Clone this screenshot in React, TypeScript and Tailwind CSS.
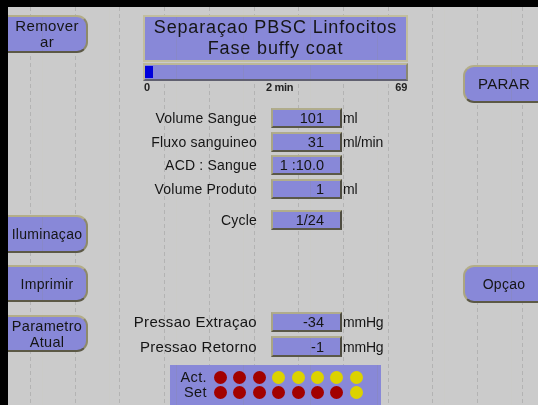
const PURPLE = "bg-[#8888d8]";

function SideButton({
  lines,
  side,
  h,
  text = "text-[14px] tracking-[0.3px]",
}: {
  lines: string[];
  side: "left" | "right";
  h: string;
  text?: string;
}) {
  const shape =
    side === "left"
      ? "rounded-r-[11px] border-2 border-l-0"
      : "rounded-l-[11px] border-2 border-r-0";
  return (
    <div
      className={`${PURPLE} ${shape} ${h} ${text} w-[80px] flex flex-col items-center justify-center border-t-[#b4ae88] border-r-[#8e8a68] border-l-[#aca680] border-b-[#5c5946] leading-[16px]`}
    >
      {lines.map((l) => (
        <span key={l}>{l}</span>
      ))}
    </div>
  );
}

function ValueRow({
  label,
  value,
  unit,
  mt,
  h = "h-[20px]",
  size = "text-[14px] tracking-[0.2px]",
}: {
  label: string;
  value: string;
  unit?: string;
  mt: string;
  h?: string;
  size?: string;
}) {
  return (
    <div className={`flex items-center ${mt} ${h}`}>
      <div className={`w-[169px] text-right leading-[16px] ${size}`}>
        {label}
      </div>
      <div
        className={`${PURPLE} ml-[14px] w-[71px] h-full flex items-center justify-end pr-[16px] border-2 border-t-[#b0ac8c] border-l-[#aaa684] border-b-[#5a5848] border-r-[#4e4c40] text-[14.5px] leading-[16px]`}
      >
        {value}
      </div>
      {unit && (
        <div className="ml-[1px] text-[14px] leading-[16px] tracking-[-0.2px]">
          {unit}
        </div>
      )}
    </div>
  );
}

function Dot({ c }: { c: "r" | "y" }) {
  return (
    <div
      className={
        c === "r"
          ? "w-[13px] h-[13px] rounded-full bg-[#a20000]"
          : "w-[13px] h-[13px] rounded-full bg-[#dcd200]"
      }
    />
  );
}

export default function App() {
  const gridA = Array.from({ length: 12 }, (_, k) => 30 + 44.7 * k);
  const gridB = Array.from({ length: 8 }, (_, k) => 42 + 67 * k);
  const act: ("r" | "y")[] = ["r", "r", "r", "y", "y", "y", "y", "y"];
  const set: ("r" | "y")[] = ["r", "r", "r", "r", "r", "r", "r", "y"];
  return (
    <div className="relative w-[538px] h-[405px] overflow-hidden bg-[#cbcbcb] border-t-[7px] border-l-[8px] border-black font-['Liberation_Sans',Arial,sans-serif] text-[#151515]">
      <svg
        className="absolute left-0 top-0 pointer-events-none"
        width={530}
        height={398}
      >
        {gridA.map((x) => (
          <line
            key={x}
            x1={Math.round(x - 8) + 0.5}
            x2={Math.round(x - 8) + 0.5}
            y1={0}
            y2={398}
            stroke="#b3b3b3"
            strokeWidth={1}
            strokeDasharray="4 3"
          />
        ))}
      </svg>

      <div className="relative flex h-full">
        {/* left column */}
        <div className="w-[80px] flex flex-col">
          <div className="mt-[8px]">
            <SideButton
              side="left"
              lines={["Remover", "ar"]}
              h="h-[38px]"
              text="text-[15px] tracking-[0.4px]"
            />
          </div>
          <div className="mt-[162px]">
            <SideButton side="left" lines={["Iluminaçao"]} h="h-[38px]" />
          </div>
          <div className="mt-[12px]">
            <SideButton side="left" lines={["Imprimir"]} h="h-[37px]" />
          </div>
          <div className="mt-[13px]">
            <SideButton
              side="left"
              lines={["Parametro", "Atual"]}
              h="h-[37px]"
              text="text-[14.5px] tracking-[0.3px]"
            />
          </div>
        </div>

        {/* center column */}
        <div className="w-[375px] flex flex-col">
          <div
            className={`${PURPLE} mt-[8px] ml-[55px] w-[265px] h-[47px] border-2 border-[#c2be9e] flex flex-col items-center justify-center text-[18px] leading-[21px] tracking-[0.85px]`}
          >
            <span>Separaçao PBSC Linfocitos</span>
            <span>Fase buffy coat</span>
          </div>
          <div
            className={`${PURPLE} mt-[1px] ml-[55px] w-[265px] h-[18px] border-2 border-t-[#bcb898] border-l-[#bcb898] border-r-[#8a8870] border-b-[#606070] flex items-stretch py-[1px]`}
          >
            <div className="w-[8px] bg-[#0000dc]" />
          </div>
          <div className="ml-[55px] w-[265px] h-[12px] flex items-center justify-between px-[1px] text-[11px] leading-[12px] font-bold tracking-[-0.3px] text-[#222]">
            <span>0</span>
            <span className="ml-[14px]">2 min</span>
            <span>69</span>
          </div>

          <ValueRow mt="mt-[15px]" label="Volume Sangue" value="101" unit="ml" />
          <ValueRow mt="mt-[4px]" label="Fluxo sanguineo" value="31" unit="ml/min" />
          <ValueRow mt="mt-[3px]" label="ACD : Sangue" value="1 :10.0" />
          <ValueRow mt="mt-[4px]" label="Volume Produto" value="1" unit="ml" />
          <ValueRow mt="mt-[11px]" label="Cycle" value="1/24" />

          <ValueRow
            mt="mt-[82px]"
            h="h-[21px]"
            size="text-[15px] tracking-[0.3px]"
            label="Pressao Extraçao"
            value="-34"
            unit="mmHg"
          />
          <ValueRow
            mt="mt-[4px]"
            h="h-[21px]"
            size="text-[15px] tracking-[0.3px]"
            label="Pressao Retorno"
            value="-1"
            unit="mmHg"
          />

          <div
            className={`${PURPLE} mt-[8px] ml-[82px] w-[211px] h-[40px] pt-[5px] flex flex-col`}
          >
            <div className="flex items-center h-[15px]">
              <div className="w-[37px] text-right text-[14.5px] leading-[15px] tracking-[0.4px]">
                Act.
              </div>
              <div className="ml-[7px] flex gap-[6.4px]">
                {act.map((c, i) => (
                  <Dot key={i} c={c} />
                ))}
              </div>
            </div>
            <div className="flex items-center h-[15px]">
              <div className="w-[37px] text-right text-[14.5px] leading-[15px] tracking-[0.4px]">
                Set
              </div>
              <div className="ml-[7px] flex gap-[6.4px]">
                {set.map((c, i) => (
                  <Dot key={i} c={c} />
                ))}
              </div>
            </div>
          </div>
        </div>

        {/* right column */}
        <div className="w-[75px] flex flex-col">
          <div className="mt-[58px]">
            <SideButton
              side="right"
              lines={["PARAR"]}
              h="h-[38px]"
              text="text-[15px] tracking-[0.3px]"
            />
          </div>
          <div className="mt-[162px]">
            <SideButton side="right" lines={["Opçao"]} h="h-[38px]" />
          </div>
        </div>
      </div>

      {/* faint screen grid visible only over the lilac panels */}
      <svg
        className="absolute left-0 top-0 pointer-events-none mix-blend-darken"
        width={530}
        height={398}
      >
        {gridB.map((x) => (
          <line
            key={x}
            x1={x - 8 + 0.5}
            x2={x - 8 + 0.5}
            y1={0}
            y2={398}
            stroke="rgb(230,230,200)"
            strokeWidth={1}
          />
        ))}
      </svg>
    </div>
  );
}
